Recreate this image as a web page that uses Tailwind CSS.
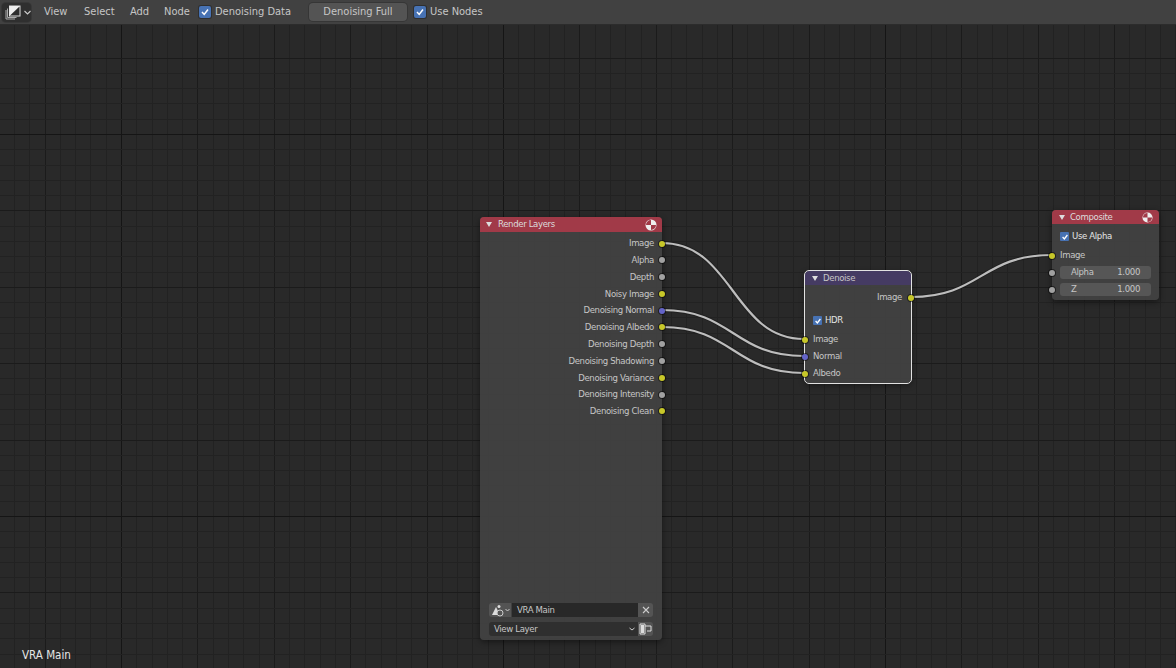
<!DOCTYPE html>
<html lang="en">
<head>
    <meta charset="UTF-8">
    <title>Compositor</title>
    <script src="https://cdn.jsdelivr.net/npm/@tailwindcss/browser@4"></script>
</head>
<body class="bg-[#292929] overflow-hidden font-['DejaVu_Sans_Condensed','DejaVu_Sans',sans-serif] text-[#c6c6c6]">
<div class="w-[1176px] h-[668px] flex flex-col">

    <!-- Header bar -->
    <div class="h-6 shrink-0 bg-[#414141] flex items-center text-[11px] z-10 shadow-[0_1px_0_#2c2c2c]">
        <div class="ml-[2px] w-[29px] h-[19px] rounded bg-[#2f2f2f] ring-1 ring-[#383838] flex items-center pl-[3px] gap-[3px]">
            <svg width="16" height="15" viewBox="0 0 16 15">
                <path d="M1 5v9h9" fill="none" stroke="#aaa"/>
                <path d="M2.5 3.5v9h9" fill="none" stroke="#aaa"/>
                <rect x="4.5" y="1" width="10.5" height="10" fill="#2d2d2d" stroke="#ddd"/>
                <path d="M4.5 11V1H15z" fill="#eee"/>
            </svg>
            <svg width="7" height="5" viewBox="0 0 7 5"><path d="M0.5 1l3 3 3-3" fill="none" stroke="#ccc" stroke-width="1.1"/></svg>
        </div>
        <span class="ml-[13px] w-[40px] pt-px">View</span>
        <span class="w-[46px] pt-px">Select</span>
        <span class="w-[34px] pt-px">Add</span>
        <span class="w-[35px] pt-px">Node</span>
        <span class="w-[12px] h-[12px] rounded-[2px] bg-[#4772b3] ring-1 ring-[#2f2f2f] flex items-center justify-center">
            <svg width="10" height="10" viewBox="0 0 10 10"><path d="M2 5l2.2 2.4L8 2.5" fill="none" stroke="#fff" stroke-width="1.5"/></svg>
        </span>
        <span class="ml-[4px] w-[76px] pt-px whitespace-nowrap">Denoising Data</span>
        <div class="ml-[18px] w-[98px] h-[18px] pt-px rounded bg-[#545454] ring-1 ring-[#363636] flex items-center justify-center">Denoising Full</div>
        <span class="ml-[7px] w-[12px] h-[12px] rounded-[2px] bg-[#4772b3] ring-1 ring-[#2f2f2f] flex items-center justify-center">
            <svg width="10" height="10" viewBox="0 0 10 10"><path d="M2 5l2.2 2.4L8 2.5" fill="none" stroke="#fff" stroke-width="1.5"/></svg>
        </span>
        <span class="ml-[4px] pt-px">Use Nodes</span>
    </div>

    <!-- Node canvas -->
    <div class="relative flex-1">
        <svg id="grid" class="absolute left-0 top-[-24px]" width="1176" height="668"></svg>

        <!-- Links -->
        <svg class="absolute left-0 top-[-24px]" width="1176" height="668" fill="none">
            <g stroke="#1c1c1c" stroke-width="4" stroke-opacity="0.7">
                <path d="M662 243C733 243 733 339 804 339"/>
                <path d="M662 310C733 310 733 356 804 356"/>
                <path d="M662 327C733 327 733 373 804 373"/>
                <path d="M911 297C981 297 981 255 1052 255"/>
            </g>
            <g stroke="#bdbdbd" stroke-width="2.2">
                <path d="M662 243C733 243 733 339 804 339"/>
                <path d="M662 310C733 310 733 356 804 356"/>
                <path d="M662 327C733 327 733 373 804 373"/>
                <path d="M911 297C981 297 981 255 1052 255"/>
            </g>
        </svg>

        <!-- Render Layers node -->
        <div class="absolute left-[480px] top-[193px] w-[182px] h-[423px] rounded bg-[#414141]/95 shadow-[0_2px_6px_rgba(0,0,0,0.45)] flex flex-col text-[9.5px] tracking-[-0.35px]">
            <div class="h-[15px] rounded-t bg-[#a13a48] flex items-center px-[6px] text-[#dcdcdc]">
                <svg width="6" height="5" viewBox="0 0 6 5"><path d="M0 0h6L3 5z" fill="#ddd"/></svg>
                <span class="ml-[6px]">Render Layers</span>
                <svg class="ml-auto mr-[-1px]" width="12" height="12" viewBox="0 0 12 12">
                    <circle cx="6" cy="6" r="5.5" fill="#eee"/>
                    <path d="M6 1a5 5 0 0 0-5 5h5zM6 6h5a5 5 0 0 1-5 5z" fill="#a13a48"/>
                </svg>
            </div>
            <div class="pt-[3px] flex flex-col">
                <div class="relative h-[16.8px] flex items-center justify-end pr-[8px]">Image<i class="absolute right-[-3px] top-[5.5px] w-[6px] h-[6px] rounded-full bg-[#c7c729] ring-1 ring-black/50"></i></div>
                <div class="relative h-[16.8px] flex items-center justify-end pr-[8px]">Alpha<i class="absolute right-[-3px] top-[5.5px] w-[6px] h-[6px] rounded-full bg-[#a1a1a1] ring-1 ring-black/50"></i></div>
                <div class="relative h-[16.8px] flex items-center justify-end pr-[8px]">Depth<i class="absolute right-[-3px] top-[5.5px] w-[6px] h-[6px] rounded-full bg-[#a1a1a1] ring-1 ring-black/50"></i></div>
                <div class="relative h-[16.8px] flex items-center justify-end pr-[8px]">Noisy Image<i class="absolute right-[-3px] top-[5.5px] w-[6px] h-[6px] rounded-full bg-[#c7c729] ring-1 ring-black/50"></i></div>
                <div class="relative h-[16.8px] flex items-center justify-end pr-[8px]">Denoising Normal<i class="absolute right-[-3px] top-[5.5px] w-[6px] h-[6px] rounded-full bg-[#6363c7] ring-1 ring-black/50"></i></div>
                <div class="relative h-[16.8px] flex items-center justify-end pr-[8px]">Denoising Albedo<i class="absolute right-[-3px] top-[5.5px] w-[6px] h-[6px] rounded-full bg-[#c7c729] ring-1 ring-black/50"></i></div>
                <div class="relative h-[16.8px] flex items-center justify-end pr-[8px]">Denoising Depth<i class="absolute right-[-3px] top-[5.5px] w-[6px] h-[6px] rounded-full bg-[#a1a1a1] ring-1 ring-black/50"></i></div>
                <div class="relative h-[16.8px] flex items-center justify-end pr-[8px]">Denoising Shadowing<i class="absolute right-[-3px] top-[5.5px] w-[6px] h-[6px] rounded-full bg-[#a1a1a1] ring-1 ring-black/50"></i></div>
                <div class="relative h-[16.8px] flex items-center justify-end pr-[8px]">Denoising Variance<i class="absolute right-[-3px] top-[5.5px] w-[6px] h-[6px] rounded-full bg-[#c7c729] ring-1 ring-black/50"></i></div>
                <div class="relative h-[16.8px] flex items-center justify-end pr-[8px]">Denoising Intensity<i class="absolute right-[-3px] top-[5.5px] w-[6px] h-[6px] rounded-full bg-[#a1a1a1] ring-1 ring-black/50"></i></div>
                <div class="relative h-[16.8px] flex items-center justify-end pr-[8px]">Denoising Clean<i class="absolute right-[-3px] top-[5.5px] w-[6px] h-[6px] rounded-full bg-[#c7c729] ring-1 ring-black/50"></i></div>
            </div>
            <div class="mt-auto px-[9px] pb-[4px] flex flex-col gap-[5px]">
                <div class="flex h-[14px]">
                    <div class="w-[22px] rounded-l-[3px] bg-[#545454] flex items-center pl-[2px] gap-[1px]">
                        <svg width="13" height="13" viewBox="0 0 13 13">
                            <path d="M1 11l3-6 1-2 2 4 1 4z" fill="#ddd"/>
                            <circle cx="8" cy="2.5" r="1.5" fill="#ddd"/>
                            <circle cx="9" cy="9" r="3" fill="#545454" stroke="#ccc"/>
                        </svg>
                        <svg width="5" height="4" viewBox="0 0 5 4"><path d="M0.5 1l2 2 2-2" fill="none" stroke="#ccc"/></svg>
                    </div>
                    <div class="flex-1 ml-px bg-[#282828] pl-[5px] flex items-center">VRA Main</div>
                    <div class="w-[15px] rounded-r-[3px] bg-[#545454] flex items-center justify-center">
                        <svg width="8" height="8" viewBox="0 0 8 8"><path d="M1 1l6 6M7 1l-6 6" stroke="#ccc" stroke-width="1.1"/></svg>
                    </div>
                </div>
                <div class="flex h-[14px]">
                    <div class="flex-1 rounded-l-[3px] bg-[#2f2f2f] pl-[5px] pr-[3px] flex items-center justify-between">
                        View Layer
                        <svg width="6" height="4" viewBox="0 0 6 4"><path d="M0.5 1l2.5 2 2.5-2" fill="none" stroke="#ccc"/></svg>
                    </div>
                    <div class="w-[15px] rounded-r-[3px] bg-[#545454] flex items-center justify-center">
                        <svg width="13" height="12" viewBox="0 0 13 12">
                            <path d="M1 1h5v10H1zM6 3h6v5H8" fill="none" stroke="#ddd"/>
                            <path d="M2 2h3v8H2z" fill="#ddd"/>
                        </svg>
                    </div>
                </div>
            </div>
        </div>

        <!-- Denoise node -->
        <div class="absolute left-[805px] top-[247px] w-[106px] h-[112px] rounded bg-[#414141]/95 outline outline-[#e2e2e2] shadow-[0_2px_6px_rgba(0,0,0,0.45)] flex flex-col text-[9.5px] tracking-[-0.35px]">
            <div class="h-[14px] rounded-t bg-[#453b63] flex items-center px-[7px]">
                <svg width="6" height="5" viewBox="0 0 6 5"><path d="M0 0h6L3 5z" fill="#ddd"/></svg>
                <span class="ml-[5px]">Denoise</span>
            </div>
            <div class="relative h-[17px] mt-[4px] flex items-center justify-end pr-[9px]">Image<i class="absolute right-[-3px] top-[5.5px] w-[6px] h-[6px] rounded-full bg-[#c7c729] ring-1 ring-black/50"></i></div>
            <div class="h-[17px] mt-[6px] pl-[8px] flex items-center gap-[3px] text-[#e4e4e4]">
                <span class="w-[9px] h-[9px] rounded-[1px] bg-[#4772b3] flex items-center justify-center">
                    <svg width="8" height="8" viewBox="0 0 10 10"><path d="M2 5l2.2 2.4L8 2.5" fill="none" stroke="#fff" stroke-width="1.6"/></svg>
                </span>
                HDR
            </div>
            <div class="relative h-[17px] mt-[2px] flex items-center pl-[8px]">Image<i class="absolute left-[-3px] top-[5.5px] w-[6px] h-[6px] rounded-full bg-[#c7c729] ring-1 ring-black/50"></i></div>
            <div class="relative h-[17px] flex items-center pl-[8px]">Normal<i class="absolute left-[-3px] top-[5.5px] w-[6px] h-[6px] rounded-full bg-[#6363c7] ring-1 ring-black/50"></i></div>
            <div class="relative h-[17px] flex items-center pl-[8px]">Albedo<i class="absolute left-[-3px] top-[5.5px] w-[6px] h-[6px] rounded-full bg-[#c7c729] ring-1 ring-black/50"></i></div>
        </div>

        <!-- Composite node -->
        <div class="absolute left-[1052px] top-[186px] w-[107px] h-[90px] rounded bg-[#414141]/95 shadow-[0_2px_6px_rgba(0,0,0,0.45)] flex flex-col text-[9.5px] tracking-[-0.35px]">
            <div class="h-[14px] rounded-t bg-[#a13a48] flex items-center px-[7px] text-[#dcdcdc]">
                <svg width="6" height="5" viewBox="0 0 6 5"><path d="M0 0h6L3 5z" fill="#ddd"/></svg>
                <span class="ml-[5px]">Composite</span>
                <svg class="ml-auto mr-[-1px]" width="11" height="11" viewBox="0 0 12 12">
                    <circle cx="6" cy="6" r="5.5" fill="#eee"/>
                    <path d="M6 1a5 5 0 0 0-5 5h5zM6 6h5a5 5 0 0 1-5 5z" fill="#a13a48"/>
                </svg>
            </div>
            <div class="h-[17px] mt-[4px] pl-[8px] flex items-center gap-[3px] text-[#e4e4e4]">
                <span class="w-[9px] h-[9px] rounded-[1px] bg-[#4772b3] flex items-center justify-center">
                    <svg width="8" height="8" viewBox="0 0 10 10"><path d="M2 5l2.2 2.4L8 2.5" fill="none" stroke="#fff" stroke-width="1.6"/></svg>
                </span>
                Use Alpha
            </div>
            <div class="relative h-[17px] mt-[2px] flex items-center pl-[8px]">Image<i class="absolute left-[-3px] top-[5.5px] w-[6px] h-[6px] rounded-full bg-[#c7c729] ring-1 ring-black/50"></i></div>
            <div class="relative h-[17px] flex items-center pl-[8px] pr-[8px]">
                <div class="flex-1 h-[13px] rounded-[3px] bg-[#565656] flex items-center justify-between px-[11px]"><span>Alpha</span><span>1.000</span></div>
                <i class="absolute left-[-3px] top-[5.5px] w-[6px] h-[6px] rounded-full bg-[#a1a1a1] ring-1 ring-black/50"></i>
            </div>
            <div class="relative h-[17px] flex items-center pl-[8px] pr-[8px]">
                <div class="flex-1 h-[13px] rounded-[3px] bg-[#565656] flex items-center justify-between px-[11px]"><span>Z</span><span>1.000</span></div>
                <i class="absolute left-[-3px] top-[5.5px] w-[6px] h-[6px] rounded-full bg-[#a1a1a1] ring-1 ring-black/50"></i>
            </div>
        </div>

        <span class="absolute left-[22px] top-[623px] text-[11.5px] text-[#e6e6e6]">VRA Main</span>
    </div>
</div>

<script>
    // Draw the editor grid with crisp, whole-pixel lines
    const grid = document.getElementById('grid');
    const step = 15.28;
    const addLine = (x1, y1, x2, y2, colour) => {
        const line = document.createElementNS('http://www.w3.org/2000/svg', 'line');
        line.setAttribute('x1', x1);
        line.setAttribute('y1', y1);
        line.setAttribute('x2', x2);
        line.setAttribute('y2', y2);
        line.setAttribute('stroke', colour);
        grid.appendChild(line);
    };
    const colourFor = (i) => (i % 25 === 0 ? '#151515' : i % 5 === 0 ? '#1b1b1b' : '#222222');
    for (let i = 0; i < 80; i++) {
        const x = Math.round(503 - 33 * step + i * step) + 0.5;
        addLine(x, 0, x, 668, colourFor(i + 17));
    }
    for (let i = 0; i < 46; i++) {
        const y = Math.round(134 - 5 * step + i * step) + 0.5;
        addLine(0, y, 1176, y, colourFor(i + 20));
    }
</script>
</body>
</html>
